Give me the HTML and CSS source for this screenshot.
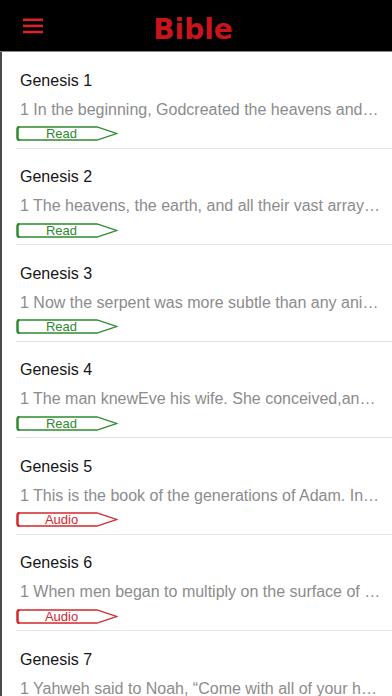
FILE: index.html
```html
<!DOCTYPE html>
<html>
<head>
<meta charset="utf-8">
<link rel="stylesheet" href="styles.css">
</head>
<body>
<header class="topbar">
  <button class="menu" aria-label="Menu">
    <svg width="20" height="18" viewBox="0 0 20 18"><rect x="0" y="1.5" width="20" height="2.6" fill="#d8222c"/><rect x="0" y="7.6" width="20" height="2.6" fill="#d8222c"/><rect x="0" y="13.7" width="20" height="2.6" fill="#d8222c"/></svg>
  </button>
  <h1 class="brand">Bible</h1>
</header>
<main class="list">
  <div class="item">
    <div class="title">Genesis 1</div>
    <div class="verse">1 In the beginning, Godcreated the heavens and the earth.</div>
    <div class="tag tag-read"><svg class="tag-shape" width="102" height="15" viewBox="0 0 102 15"><path d="M3.5 1 H81 L100.5 7.5 L81 14 H3.5 Q1.5 14 1.5 12 V3 Q1.5 1 3.5 1 Z"/><path class="edge" d="M3.5 1 Q1.5 1 1.5 3 V12 Q1.5 14 3.5 14"/></svg><span>Read</span></div>
  </div>
  <div class="item">
    <div class="title">Genesis 2</div>
    <div class="verse">1 The heavens, the earth, and all their vast array were finished.</div>
    <div class="tag tag-read"><svg class="tag-shape" width="102" height="15" viewBox="0 0 102 15"><path d="M3.5 1 H81 L100.5 7.5 L81 14 H3.5 Q1.5 14 1.5 12 V3 Q1.5 1 3.5 1 Z"/><path class="edge" d="M3.5 1 Q1.5 1 1.5 3 V12 Q1.5 14 3.5 14"/></svg><span>Read</span></div>
  </div>
  <div class="item">
    <div class="title">Genesis 3</div>
    <div class="verse">1 Now the serpent was more subtle than any animal of the field.</div>
    <div class="tag tag-read"><svg class="tag-shape" width="102" height="15" viewBox="0 0 102 15"><path d="M3.5 1 H81 L100.5 7.5 L81 14 H3.5 Q1.5 14 1.5 12 V3 Q1.5 1 3.5 1 Z"/><path class="edge" d="M3.5 1 Q1.5 1 1.5 3 V12 Q1.5 14 3.5 14"/></svg><span>Read</span></div>
  </div>
  <div class="item">
    <div class="title">Genesis 4</div>
    <div class="verse">1 The man knewEve his wife. She conceived,and gave birth to Cain.</div>
    <div class="tag tag-read"><svg class="tag-shape" width="102" height="15" viewBox="0 0 102 15"><path d="M3.5 1 H81 L100.5 7.5 L81 14 H3.5 Q1.5 14 1.5 12 V3 Q1.5 1 3.5 1 Z"/><path class="edge" d="M3.5 1 Q1.5 1 1.5 3 V12 Q1.5 14 3.5 14"/></svg><span>Read</span></div>
  </div>
  <div class="item">
    <div class="title">Genesis 5</div>
    <div class="verse">1 This is the book of the generations of Adam. In the day that God created man.</div>
    <div class="tag tag-audio"><svg class="tag-shape" width="102" height="15" viewBox="0 0 102 15"><path d="M3.5 1 H81 L100.5 7.5 L81 14 H3.5 Q1.5 14 1.5 12 V3 Q1.5 1 3.5 1 Z"/><path class="edge" d="M3.5 1 Q1.5 1 1.5 3 V12 Q1.5 14 3.5 14"/></svg><span>Audio</span></div>
  </div>
  <div class="item">
    <div class="title">Genesis 6</div>
    <div class="verse">1 When men began to multiply on the surface of the ground.</div>
    <div class="tag tag-audio"><svg class="tag-shape" width="102" height="15" viewBox="0 0 102 15"><path d="M3.5 1 H81 L100.5 7.5 L81 14 H3.5 Q1.5 14 1.5 12 V3 Q1.5 1 3.5 1 Z"/><path class="edge" d="M3.5 1 Q1.5 1 1.5 3 V12 Q1.5 14 3.5 14"/></svg><span>Audio</span></div>
  </div>
  <div class="item">
    <div class="title">Genesis 7</div>
    <div class="verse">1 Yahweh said to Noah, “Come with all of your household into the ship.”</div>
    <div class="tag tag-read"><svg class="tag-shape" width="102" height="15" viewBox="0 0 102 15"><path d="M3.5 1 H81 L100.5 7.5 L81 14 H3.5 Q1.5 14 1.5 12 V3 Q1.5 1 3.5 1 Z"/><path class="edge" d="M3.5 1 Q1.5 1 1.5 3 V12 Q1.5 14 3.5 14"/></svg><span>Read</span></div>
  </div>
</main>
</body>
</html>
```
FILE: styles.css
```css
* { box-sizing: border-box; }
html, body {
  margin: 0;
  padding: 0;
  background: #fff;
  overflow: hidden;
  height: 696px;
}
body {
  font-family: "Liberation Sans", Arial, sans-serif;
}
.topbar {
  height: 52px;
  background: #000;
  border-bottom: 1px solid #8a8a8a;
  display: flex;
  align-items: center;
  position: relative;
}
.menu {
  background: none;
  border: 0;
  padding: 0;
  margin-left: 23px;
  width: 20px;
  height: 18px;
  display: flex;
  margin-top: 1px;
}
.brand {
  position: absolute;
  left: 0;
  right: 0;
  top: 0;
  margin: 0;
  text-align: center;
  line-height: 60px;
  font-family: "DejaVu Sans", sans-serif;
  font-weight: bold;
  font-size: 28px;
  color: #c9141c;
  letter-spacing: 0;
  padding-right: 6px;
  pointer-events: none;
}
.list {
  border-left: 2px solid #4a4a4a;
  height: 644px;
  overflow: hidden;
}
.item {
  margin-left: 14px;
  padding: 18.5px 10px 6.5px 4px;
  border-bottom: 1px solid #e3e3e3;
}
.title {
  font-size: 16px;
  line-height: 20px;
  color: #151515;
}
.verse {
  margin-top: 9px;
  font-size: 16px;
  line-height: 20px;
  color: #8c8c8c;
  white-space: nowrap;
  overflow: hidden;
  text-overflow: ellipsis;
}
.tag {
  position: relative;
  margin-top: 6.5px;
  margin-left: -4px;
  width: 102px;
  height: 15px;
}
.tag-shape {
  position: absolute;
  left: 0;
  top: 0;
  fill: none;
  stroke-width: 1.3;
}
.tag-shape .edge {
  stroke-width: 2.4;
}
.tag span {
  position: absolute;
  left: 0;
  top: 0;
  width: 91px;
  text-align: center;
  font-size: 13px;
  line-height: 15px;
}
.tag-read .tag-shape { stroke: #2d8a2d; }
.tag-read span { color: #2d8a2d; }
.tag-audio .tag-shape { stroke: #d6262c; }
.tag-audio span { color: #d6262c; }
```
